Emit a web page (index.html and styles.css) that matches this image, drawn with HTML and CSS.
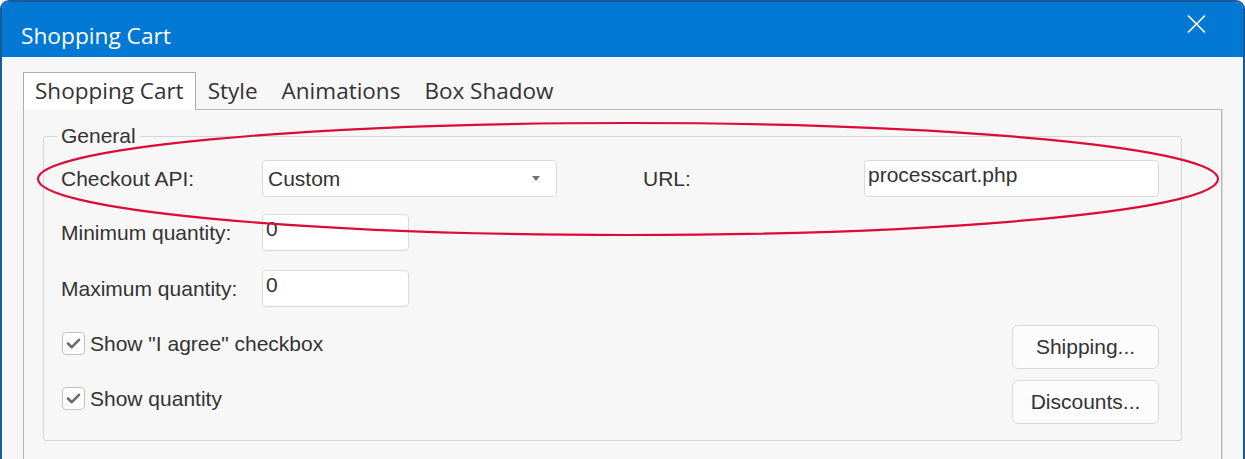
FILE: index.html
```html
<!DOCTYPE html>
<html>
<head>
<meta charset="utf-8">
<title>Shopping Cart</title>
<link rel="stylesheet" href="styles.css">
</head>
<body>
<div class="window">
  <div class="titlebar">
    <span class="title">Shopping Cart</span>
    <svg class="close" width="19" height="18" viewBox="0 0 19 18" aria-label="Close">
      <path d="M1 0.5 L18 17.5 M18 0.5 L1 17.5" stroke="#ffffff" stroke-width="1.6" fill="none"/>
    </svg>
  </div>
  <div class="content">
    <div class="tabs">
      <div class="tab active">Shopping Cart</div>
      <div class="tab">Style</div>
      <div class="tab">Animations</div>
      <div class="tab">Box Shadow</div>
    </div>
    <div class="panel">
      <fieldset class="group">
        <legend>General</legend>
        <div class="row row-api">
          <span class="lbl">Checkout API:</span>
          <div class="select"><span>Custom</span><span class="arrow"></span></div>
          <span class="lbl url-lbl">URL:</span>
          <div class="field url">processcart.php</div>
        </div>
        <div class="row row-min">
          <span class="lbl">Minimum quantity:</span>
          <div class="field qty">0</div>
        </div>
        <div class="row row-max">
          <span class="lbl">Maximum quantity:</span>
          <div class="field qty">0</div>
        </div>
        <div class="row row-btn row-agree">
          <div class="check">
            <span class="box"><svg width="21" height="21" viewBox="0 0 21 21"><path d="M5 10.5 L8.8 14.2 L16 6.8" stroke="#6b6b6b" stroke-width="2.6" fill="none" stroke-linecap="round" stroke-linejoin="round"/></svg></span>
            <span class="check-lbl">Show "I agree" checkbox</span>
          </div>
          <div class="btn">Shipping...</div>
        </div>
        <div class="row row-btn row-qty">
          <div class="check">
            <span class="box"><svg width="21" height="21" viewBox="0 0 21 21"><path d="M5 10.5 L8.8 14.2 L16 6.8" stroke="#6b6b6b" stroke-width="2.6" fill="none" stroke-linecap="round" stroke-linejoin="round"/></svg></span>
            <span class="check-lbl">Show quantity</span>
          </div>
          <div class="btn">Discounts...</div>
        </div>
      </fieldset>
    </div>
  </div>
</div>
<svg class="highlight" width="1245" height="459" viewBox="0 0 1245 459">
  <ellipse cx="628" cy="179" rx="590" ry="56" fill="none" stroke="#dc0b37" stroke-width="2.2"/>
</svg>
</body>
</html>
```

FILE: styles.css
```css
html, body {
  margin: 0;
  padding: 0;
  background: #ffffff;
}
body {
  position: relative;
  width: 1245px;
  height: 459px;
  overflow: hidden;
}
.window {
  box-sizing: border-box;
  width: 1245px;
  height: 459px;
  border: 2px solid #175b9b;
  border-bottom: none;
  border-radius: 9px 9px 0 0;
  overflow: hidden;
  background: #f7f7f7;
  display: flex;
  flex-direction: column;
}
.titlebar {
  height: 55px;
  flex: none;
  background: #0078d4;
  display: flex;
  align-items: flex-start;
}
.title {
  font-family: "Open Sans", "Noto Sans", sans-serif;
  font-size: 22.7px;
  color: #ffffff;
  margin-top: 18px;
  margin-left: 19px;
  line-height: 31px;
}
.close {
  margin-left: auto;
  margin-right: 37px;
  margin-top: 13px;
}
.content {
  flex: 1;
  display: flex;
  flex-direction: column;
  min-height: 0;
}
.tabs {
  display: flex;
  margin-top: 15px;
  padding-left: 21px;
  position: relative;
  z-index: 1;
}
.tab {
  font-family: "Open Sans", "Noto Sans", sans-serif;
  font-size: 22.5px;
  line-height: 31px;
  color: #333333;
  padding: 2px 11px 3px;
  border: 1px solid transparent;
  border-bottom: none;
}
.tab.active {
  background: #ffffff;
  border-color: #adadad;
  margin-bottom: -1px;
}
.panel {
  flex: 1;
  margin: 0 21px;
  border: 1px solid #b5b5b5;
  border-bottom: none;
  padding: 14px 39px 0 19px;
  box-shadow: 1px 0 0 #dcdcdc;
}
.group {
  margin: 0;
  border: 1px solid #d4d4d4;
  border-radius: 3px;
  padding: 12px 22px 16px 17px;
  font-family: "Liberation Sans", Arial, sans-serif;
  font-size: 21px;
  color: #333333;
  display: flex;
  flex-direction: column;
}
.group legend {
  padding: 0 4px;
  margin-left: -4px;
  line-height: 24px;
  font-size: 21px;
  color: #333333;
}
.row {
  display: flex;
  align-items: center;
  height: 37px;
  line-height: 24px;
}
.row-min { margin-top: 17px; }
.row-max { margin-top: 19px; }
.row-agree { margin-top: 18px; }
.row-qty { margin-top: 11px; }
.row-btn {
  height: 44px;
  align-items: flex-start;
  justify-content: space-between;
}
.lbl {
  width: 201px;
  flex: none;
}
.url-lbl {
  margin-left: 86px;
  width: 221px;
}
.select {
  box-sizing: border-box;
  width: 295px;
  height: 37px;
  border: 1px solid #d9d9d9;
  border-radius: 4px;
  background: #ffffff;
  display: flex;
  align-items: center;
  padding-left: 5px;
}
.arrow {
  margin-left: auto;
  margin-right: 16px;
  width: 0;
  height: 0;
  border-left: 4.5px solid transparent;
  border-right: 4.5px solid transparent;
  border-top: 5px solid #707070;
}
.field {
  box-sizing: border-box;
  height: 37px;
  border: 1px solid #d9d9d9;
  border-radius: 4px;
  background: #ffffff;
  padding: 2px 3px 0;
  align-self: stretch;
}
.url { width: 295px; }
.qty { width: 147px; }
.check {
  display: flex;
  align-items: flex-start;
  margin-top: 7px;
  margin-left: 1px;
}
.box {
  box-sizing: border-box;
  width: 23px;
  height: 23px;
  border: 1px solid #c3c3c3;
  border-radius: 4px;
  background: #ffffff;
  display: flex;
  align-items: center;
  justify-content: center;
}
.check-lbl {
  margin-left: 5px;
  line-height: 24px;
}
.btn {
  box-sizing: border-box;
  width: 147px;
  height: 44px;
  border: 1px solid #d9d9d9;
  border-radius: 6px;
  background: #fcfcfc;
  display: flex;
  align-items: center;
  justify-content: center;
}
.highlight {
  position: absolute;
  left: 0;
  top: 0;
  pointer-events: none;
}
```
